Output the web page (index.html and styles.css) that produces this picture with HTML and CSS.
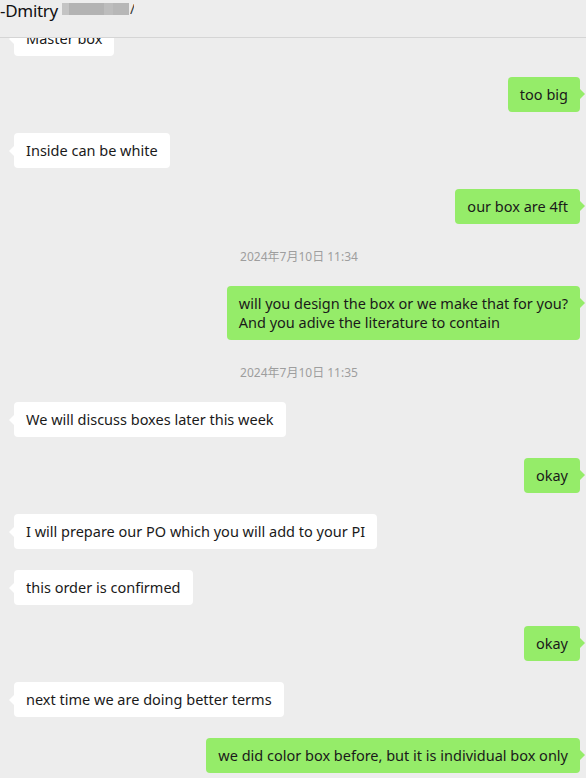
FILE: index.html
```html
<!DOCTYPE html>
<html lang="en">
<head>
<meta charset="utf-8">
<title>Chat</title>
<link rel="stylesheet" href="styles.css">
</head>
<body>
<div class="window">
  <header class="header">
    <span class="title">-Dmitry</span>
    <span class="mosaic">
      <span class="m1"></span><span class="m2"></span><span class="m3"></span><span class="m4"></span>
    </span>
    <span class="tail-char">/</span>
  </header>
  <main class="messages">
    <div class="row left first"><div class="bubble white">Master box</div></div>
    <div class="row right"><div class="bubble green">too big</div></div>
    <div class="row left"><div class="bubble white">Inside can be white</div></div>
    <div class="row right"><div class="bubble green">our box are 4ft</div></div>
    <div class="time">2024年7月10日 11:34</div>
    <div class="row right"><div class="bubble green">will you design the box or we make that for you?<br>And you adive the literature to contain</div></div>
    <div class="time">2024年7月10日 11:35</div>
    <div class="row left"><div class="bubble white">We will discuss boxes later this week</div></div>
    <div class="row right"><div class="bubble green">okay</div></div>
    <div class="row left"><div class="bubble white">I will prepare our PO which you will add to your PI</div></div>
    <div class="row left"><div class="bubble white">this order is confirmed</div></div>
    <div class="row right"><div class="bubble green">okay</div></div>
    <div class="row left"><div class="bubble white">next time we are doing better terms</div></div>
    <div class="row right"><div class="bubble green">we did color box before, but it is individual box only</div></div>
  </main>
</div>
</body>
</html>
```

FILE: styles.css
```css
* { box-sizing: border-box; }
html, body {
  margin: 0;
  padding: 0;
  background: #ededed;
}
body {
  font-family: "Microsoft YaHei", "Noto Sans", "Liberation Sans", "Noto Sans CJK SC", sans-serif;
  color: #1a1a1a;
  width: 586px;
  height: 778px;
  overflow: hidden;
}
.window {
  display: flex;
  flex-direction: column;
  height: 778px;
}
.header {
  height: 38px;
  flex: none;
  display: flex;
  align-items: flex-start;
  border-bottom: 1px solid #d5d5d5;
  background: #ededed;
  position: relative;
  z-index: 2;
}
.title {
  font-size: 17px;
  line-height: 22px;
  color: #111;
  letter-spacing: -0.3px;
}
.mosaic {
  display: flex;
  margin-left: 4px;
  margin-top: 3px;
  height: 12px;
}
.mosaic span { display: block; height: 12px; }
.m1 { width: 7px; background: #c4c4c4; }
.m2 { width: 35px; background: #b3b3b3; }
.m3 { width: 9px; background: #bdbdbd; }
.m4 { width: 16px; background: #b7b7b7; }
.tail-char {
  font-size: 14px;
  line-height: 18px;
  color: #333;
  margin-left: 1px;
  width: 4px;
  overflow: hidden;
}
.messages {
  flex: 1;
  overflow: hidden;
  display: flex;
  flex-direction: column;
  gap: 21px;
  padding: 0 6px 0 14px;
}
.row { display: flex; }
.row.left { justify-content: flex-start; }
.row.right { justify-content: flex-end; }
.row.first { margin-top: -17px; }
.bubble {
  position: relative;
  font-size: 14.5px;
  line-height: 19px;
  padding: 8px 12px;
  border-radius: 4px;
  white-space: nowrap;
}
.bubble.white { background: #ffffff; }
.bubble.green { background: #95ec69; }
.bubble.white::before {
  content: "";
  position: absolute;
  left: -5px;
  top: 13px;
  border-style: solid;
  border-width: 5px 5px 5px 0;
  border-color: transparent #ffffff transparent transparent;
}
.bubble.green::after {
  content: "";
  position: absolute;
  right: -5px;
  top: 12px;
  border-style: solid;
  border-width: 5px 0 5px 5px;
  border-color: transparent transparent transparent #95ec69;
}
.time {
  height: 20px;
  line-height: 24px;
  text-align: center;
  font-size: 12px;
  color: #9e9e9e;
  padding-left: 4px;
}
```
